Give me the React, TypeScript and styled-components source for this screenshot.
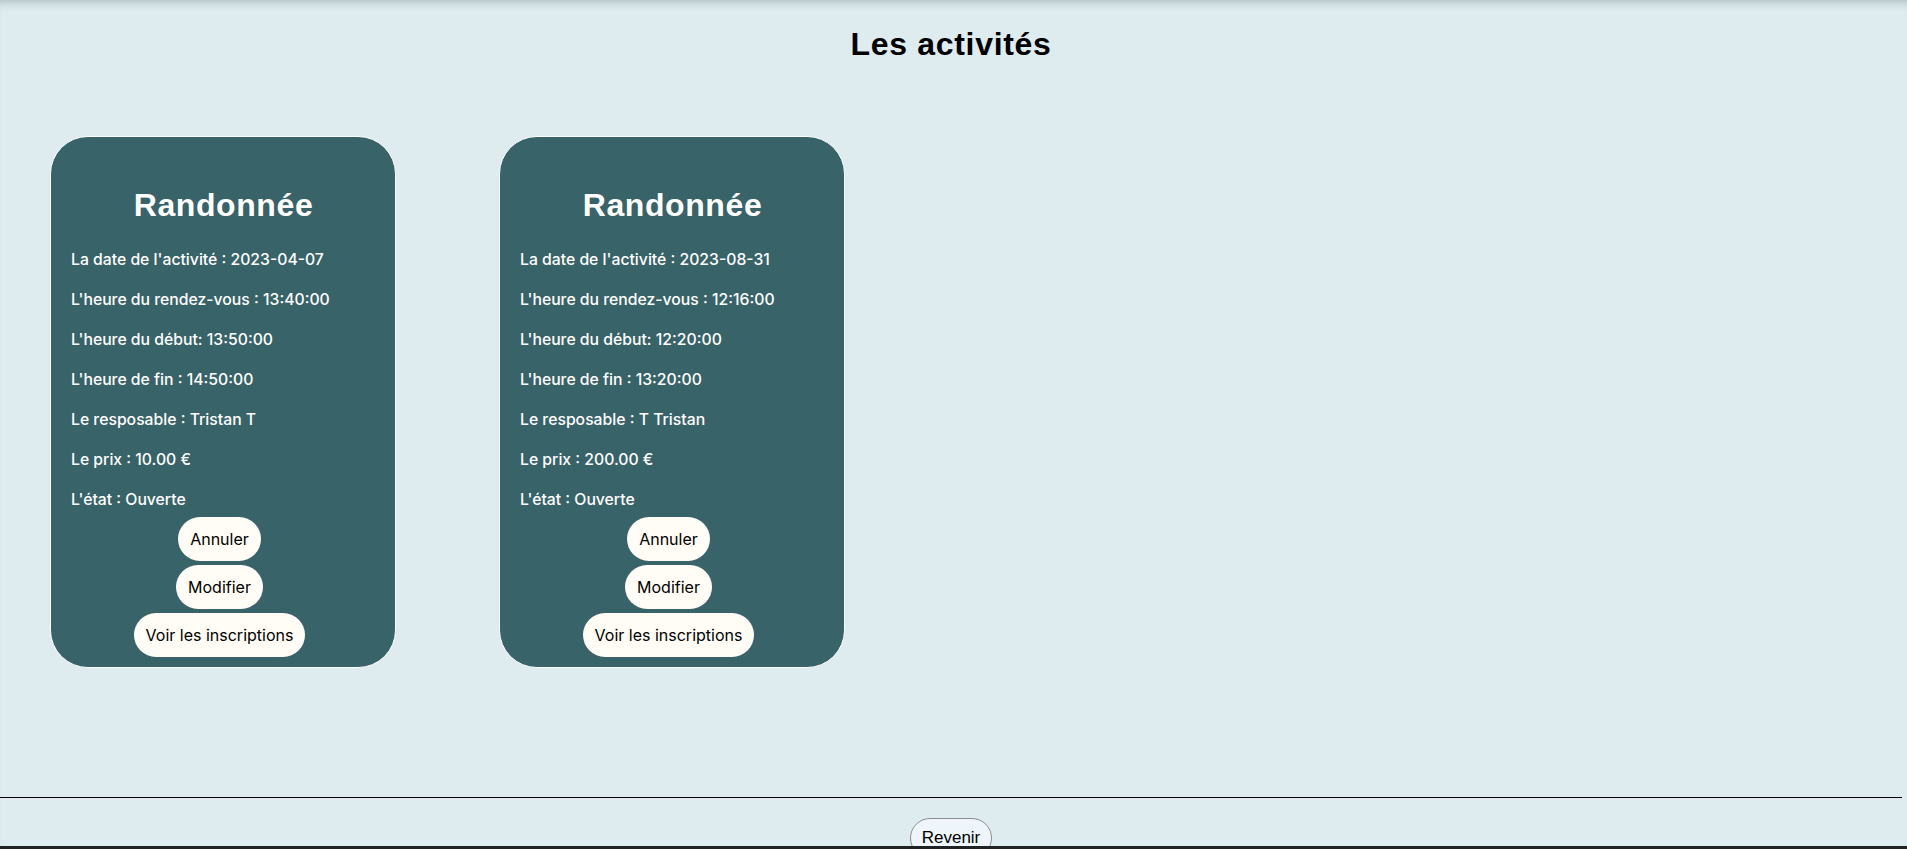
import React from "react";
import styled, { createGlobalStyle } from "styled-components";

const GlobalStyle = createGlobalStyle`
  html, body {
    margin: 0;
    padding: 0;
    background: #deebef;
    overflow: hidden;
  }
  body {
    font-family: Inter, "Liberation Sans", Arial, sans-serif;
    color: #000;
  }
`;

const Page = styled.div`
  height: 100vh;
  overflow-y: scroll;
  background: #deebef;
  box-shadow: inset 0 10px 10px -8px rgba(70, 100, 100, 0.35);

  &::-webkit-scrollbar {
    width: 5px;
  }
  &::-webkit-scrollbar-track {
    background: #f0f0f0;
  }
  &::-webkit-scrollbar-thumb {
    background: #c1c1c1;
  }
`;

const Content = styled.div`
  display: flex;
  flex-direction: column;
  padding-right: 5px;
`;

const Title = styled.h1`
  margin: 26px 0 0;
  text-align: center;
  font-family: "Liberation Sans", Arial, sans-serif;
  font-size: 32px;
  line-height: 37px;
  font-weight: 700;
  letter-spacing: 0.7px;
`;

const CardList = styled.div`
  display: flex;
  gap: 103px;
  padding: 0 0 0 50px;
  margin-top: 73px;
`;

const Card = styled.article`
  width: 346px;
  box-sizing: border-box;
  background: #386369;
  border: 1px solid #ffffff;
  border-radius: 38px;
  padding: 50px 27px 10px 20px;
  display: flex;
  flex-direction: column;
  color: #ffffff;
`;

const CardTitle = styled.h2`
  margin: 0 0 26px;
  padding-left: 8px;
  text-align: center;
  font-family: "Liberation Sans", Arial, sans-serif;
  font-size: 32px;
  line-height: 37px;
  font-weight: 700;
  letter-spacing: 0.6px;
`;

const InfoList = styled.div`
  display: flex;
  flex-direction: column;
  gap: 20px;
  margin-bottom: 7px;
`;

const Info = styled.p`
  margin: 0;
  font-size: 15.75px;
  line-height: 20px;
  font-weight: 500;
  white-space: nowrap;
`;

const Actions = styled.div`
  display: flex;
  flex-direction: column;
  align-items: center;
  gap: 4px;
`;

const PillButton = styled.button`
  height: 44px;
  padding: 0 12px;
  border: none;
  border-radius: 22px;
  background: #fffdf5;
  color: #000;
  font-family: Inter, "Liberation Sans", Arial, sans-serif;
  font-size: 16px;
  font-weight: 400;
  cursor: pointer;
`;

const Divider = styled.hr`
  margin: 129px 0 0;
  border: none;
  border-top: 1.5px solid #000;
  height: 0;
`;

const BackRow = styled.div`
  display: flex;
  justify-content: center;
  padding: 20px 0 50px;
`;

const BackButton = styled.button`
  height: 40px;
  padding: 0 11px;
  border: 1px solid #8d8d8d;
  border-radius: 20px;
  background: #eef6fc;
  color: #000;
  font-family: "Liberation Sans", Arial, sans-serif;
  font-size: 17px;
  cursor: pointer;
`;

const BottomBar = styled.div`
  position: fixed;
  left: 0;
  right: 0;
  bottom: 0;
  height: 3px;
  background: #1f2326;
`;

type Activity = {
  date: string;
  rdv: string;
  debut: string;
  fin: string;
  resp: string;
  prix: string;
  etat: string;
};

const activities: Activity[] = [
  {
    date: "2023-04-07",
    rdv: "13:40:00",
    debut: "13:50:00",
    fin: "14:50:00",
    resp: "Tristan T",
    prix: "10.00 €",
    etat: "Ouverte",
  },
  {
    date: "2023-08-31",
    rdv: "12:16:00",
    debut: "12:20:00",
    fin: "13:20:00",
    resp: "T Tristan",
    prix: "200.00 €",
    etat: "Ouverte",
  },
];

export default function App() {
  return (
    <Page>
      <GlobalStyle />
      <Content>
        <Title>Les activités</Title>
        <CardList>
          {activities.map((a, i) => (
            <Card key={i}>
              <CardTitle>Randonnée</CardTitle>
              <InfoList>
                <Info>La date de l'activité : {a.date}</Info>
                <Info>L'heure du rendez-vous : {a.rdv}</Info>
                <Info>L'heure du début: {a.debut}</Info>
                <Info>L'heure de fin : {a.fin}</Info>
                <Info>Le resposable : {a.resp}</Info>
                <Info>Le prix : {a.prix}</Info>
                <Info>L'état : {a.etat}</Info>
              </InfoList>
              <Actions>
                <PillButton>Annuler</PillButton>
                <PillButton>Modifier</PillButton>
                <PillButton>Voir les inscriptions</PillButton>
              </Actions>
            </Card>
          ))}
        </CardList>
        <Divider />
        <BackRow>
          <BackButton>Revenir</BackButton>
        </BackRow>
      </Content>
      <BottomBar />
    </Page>
  );
}
